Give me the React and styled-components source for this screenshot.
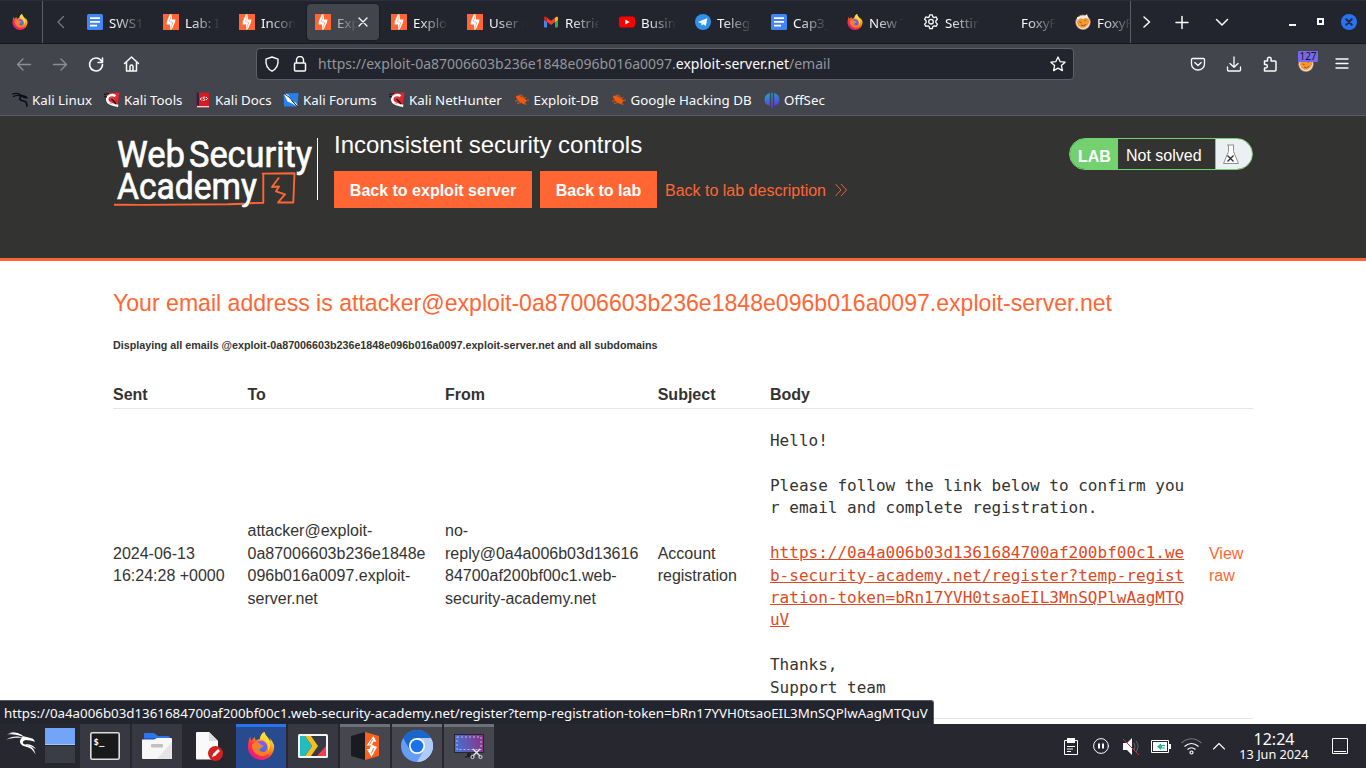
import React from "react";
import styled, { createGlobalStyle, css } from "styled-components";

const Global = createGlobalStyle`
  *, *::before, *::after { box-sizing: border-box; }
  html, body { margin: 0; padding: 0; height: 768px; overflow: hidden; background: #fff; }
  svg { display: block; flex: none; }
`;

const ui = `"Noto Sans", "Open Sans", sans-serif`;
const page = `"Liberation Sans", Arial, sans-serif`;

const Screen = styled.div`
  width: 1366px;
  height: 768px;
  display: flex;
  flex-direction: column;
  overflow: hidden;
  position: relative;
  background: #fff;
  font-family: ${ui};
`;

/* ---------- browser chrome ---------- */
const TabBar = styled.div`
  height: 44px;
  flex: none;
  display: flex;
  align-items: stretch;
  background: #23252e;
  border-top: 1px solid #2b2d41;
  border-bottom: 1px solid #16181f;
`;
const PinnedTab = styled.div`
  width: 43px;
  border-right: 1px solid #5b5c66;
  padding: 13px 0 0 12px;
`;
const ScrollLeft = styled.div`
  width: 34px;
  padding: 13px 0 0 10px;
`;
const TabStrip = styled.div`
  width: 1053px;
  display: flex;
  overflow: hidden;
`;
const Tab = styled.div`
  flex: none;
  width: 72px;
  height: 36px;
  margin: 3px 2px;
  padding-left: 8px;
  display: flex;
  align-items: center;
  border-radius: 4px;
  ${(p) => p.$active && css`
    background: #42454c;
    box-shadow: 0 0 2px rgba(0, 0, 0, 0.6);
  `}
`;
const TabIcon = styled.span`
  width: 16px;
  height: 16px;
  margin-right: 6px;
  flex: none;
`;
const TabLabel = styled.span`
  width: ${(p) => (p.$active ? 20 : 34)}px;
  overflow: hidden;
  white-space: nowrap;
  font-size: 13.33px;
  line-height: 20px;
  padding-top: 1px;
  color: #fbfbfe;
  mask-image: linear-gradient(to right, #000 ${(p) => (p.$active ? -40 : 15)}%, transparent 104%);
`;
const TabTools = styled.div`
  flex: 1;
  display: flex;
  align-items: center;
  border-left: 1px solid #5b5c66;
  padding: 0 8px 0 7px;
`;
const Gap = styled.span`
  flex: none;
  width: ${(p) => p.$w}px;
`;
const CloseWindow = styled.span`
  width: 16px;
  height: 16px;
  border-radius: 50%;
  background: #2673f5;
  display: grid;
  place-items: center;
`;

const NavBar = styled.div`
  height: 40px;
  flex: none;
  display: flex;
  align-items: center;
  padding-left: 14px;
  background: #42454c;
`;
const AddressBar = styled.div`
  width: 818px;
  height: 32px;
  display: flex;
  align-items: center;
  padding: 0 7px 0 7px;
  border: 1px solid #5d6067;
  border-radius: 4px;
  background: #23252e;
`;
const Url = styled.span`
  flex: 1;
  white-space: nowrap;
  font-size: 14px;
  line-height: 20px;
  color: #94959b;
  b { font-weight: 400; color: #fbfbfe; }
`;
const ExtensionIcon = styled.span`
  position: relative;
  width: 20px;
  height: 26px;
  padding: 5px 0 0 1px;
`;
const ExtensionCount = styled.span`
  position: absolute;
  left: 1px;
  top: 0;
  width: 20px;
  height: 11px;
  border-radius: 1px;
  background: #7767ec;
  color: #17171e;
  font-size: 10px;
  line-height: 11px;
  text-align: center;
`;

const Bookmarks = styled.div`
  height: 32px;
  flex: none;
  display: flex;
  align-items: center;
  padding: 0 0 0 12px;
  background: #42454c;
  border-bottom: 1px solid #5b5c62;
`;
const Bookmark = styled.div`
  width: ${(p) => p.$w}px;
  display: flex;
  align-items: center;
  gap: 4px;
  white-space: nowrap;
  color: #fbfbfe;
  font-size: 13.33px;
  line-height: 20px;
`;

/* ---------- lab page ---------- */
const Banner = styled.header`
  height: 145px;
  flex: none;
  display: flex;
  padding: 18px 113px 0;
  background: #333332;
  border-bottom: 3px solid #ff6633;
  color: #fff;
  font-family: ${page};
`;
const LogoBox = styled.div`
  width: 205px;
  height: 66px;
  position: relative;
`;
const BannerMain = styled.div`
  flex: 1;
  margin-left: 16px;
`;
const LabTitle = styled.h2`
  margin: 0;
  font-size: 24px;
  font-weight: 400;
  line-height: 22px;
  height: 37px;
  white-space: nowrap;
`;
const Actions = styled.div`
  display: flex;
  align-items: center;
  gap: 8px;
`;
const ActionButton = styled.a`
  width: ${(p) => p.$w}px;
  height: 37px;
  line-height: 40px;
  text-align: center;
  background: #ff6633;
  color: #fff;
  font-size: 16px;
  font-weight: 700;
  white-space: nowrap;
`;
const DescriptionLink = styled.a`
  display: flex;
  align-items: center;
  gap: 8px;
  padding-top: 2px;
  color: #ff6633;
  font-size: 16px;
  line-height: 23px;
  white-space: nowrap;
`;
const LabStatus = styled.div`
  width: 184px;
  height: 32px;
  margin-top: 4px;
  display: flex;
  overflow: hidden;
  border: 1px solid #73d26f;
  border-radius: 16px;
  font-size: 16px;
  line-height: 34px;
`;
const StatusTag = styled.span`
  width: 48px;
  padding-left: 8px;
  line-height: 36px;
  background: #73d26f;
  font-weight: 700;
`;
const StatusText = styled.span`
  flex: 1;
  padding-left: 8px;
`;
const StatusFlask = styled.span`
  width: 37px;
  padding: 5px 0 0 6px;
  background: #ecf0f2;
  border-left: 1px solid #73d26f;
`;

const Content = styled.main`
  flex: 1;
  min-height: 0;
  overflow: hidden;
  padding: 28px 113px 0;
  color: #333332;
  font-family: ${page};
`;
const Address = styled.h1`
  margin: 0;
  height: 45px;
  font-size: 23.09px;
  font-weight: 400;
  line-height: 28px;
  color: #ff6633;
  white-space: nowrap;
`;
const Notice = styled.h6`
  margin: 0;
  height: 46px;
  font-size: 10.74px;
  line-height: 22px;
  white-space: nowrap;
`;
const Row = styled.div`
  display: grid;
  grid-template-columns: 134.5px 197.5px 212.7px 112.3px 439px 44px;
  align-items: center;
  height: ${(p) => p.$h}px;
  padding-top: 2px;
  border-bottom: 1px solid #e5e5e5;
  font-size: 16px;
  font-weight: ${(p) => (p.$head ? 700 : 400)};
  line-height: 22.4px;
  white-space: pre;
`;
const Cell = styled.span`
  padding-top: 1.4px;
`;
const Mail = styled.pre`
  margin: 0;
  font-family: "DejaVu Sans Mono", monospace;
  font-size: 16px;
  line-height: 22.4px;
  a { color: #dc4a24; text-decoration: underline; }
`;
const RawLink = styled(Cell)`
  color: #ff6633;
`;

/* ---------- desktop ---------- */
const LinkPreview = styled.div`
  position: absolute;
  left: 0;
  bottom: 44px;
  width: 934px;
  height: 24px;
  padding-left: 4px;
  background: #23252e;
  border-top: 1px solid #5b5c62;
  border-right: 1px solid #5b5c62;
  border-top-right-radius: 3px;
  color: #fbfbfe;
  font-size: 13.32px;
  line-height: 25px;
  white-space: nowrap;
`;
const Taskbar = styled.footer`
  height: 44px;
  flex: none;
  display: flex;
  background: #26272f;
  color: #fcfcfc;
`;
const Launcher = styled.div`
  width: 45px;
  padding: 7px 0 0 6px;
`;
const Pager = styled.div`
  width: 30px;
  margin-right: 5px;
  padding-top: 4px;
  display: flex;
  flex-direction: column;
  gap: 1px;
`;
const Desk = styled.span`
  height: 17px;
  background: ${(p) => (p.$on ? "#72a4f8" : "#3b3d46")};
  border-bottom: ${(p) => (p.$on ? "1px solid #a5c6fd" : "0")};
`;
const taskKinds = {
  plain: css`background: #26272f; border-color: #26272f;`,
  pinned: css`background: #373841; border-color: #373841;`,
  open: css`background: #45464e; border-color: #6f7078;`,
  active: css`background: #284b8f; border-color: #2b74ef;`,
};
const Task = styled.div`
  width: 50px;
  margin-right: 2px;
  border-top: 3px solid;
  padding-bottom: 3px;
  display: grid;
  place-items: center;
  ${(p) => taskKinds[p.$kind]}
`;
const Tray = styled.div`
  margin-left: auto;
  width: 302px;
  display: flex;
  align-items: center;
`;
const Clock = styled.div`
  width: 80px;
  text-align: center;
  white-space: nowrap;
`;
const Time = styled.div`
  font-size: 16px;
  line-height: 16px;
`;
const DateText = styled.div`
  font-size: 12.7px;
  line-height: 14px;
`;

/* ---------- drawings ---------- */
const Line = ({ w = 16, h = w, box = `0 0 ${w} ${h}`, color = "#fbfbfe", sw = 1.3, children }) => (
  <svg width={w} height={h} viewBox={box} fill="none" stroke={color} strokeWidth={sw} strokeLinecap="round" strokeLinejoin="round">
    {children}
  </svg>
);
const FirefoxIcon = ({ size = 16 }) => (
  <svg width={size} height={size} viewBox="0 0 32 32">
    <defs>
      <linearGradient id="fxa" x1="0.85" y1="0.1" x2="0.2" y2="0.95">
        <stop offset="0" stopColor="#fff44f" />
        <stop offset="0.35" stopColor="#ff980e" />
        <stop offset="0.65" stopColor="#ff3647" />
        <stop offset="1" stopColor="#e31587" />
      </linearGradient>
      <linearGradient id="fxb" x1="0.5" y1="0" x2="0.5" y2="1">
        <stop offset="0" stopColor="#9059ff" />
        <stop offset="1" stopColor="#3b6ce8" />
      </linearGradient>
    </defs>
    <path d="M30 13c-1-3-3-5-4-6 1 2 1 3 1 4-2-5-6-6-7-11-4 2-5 6-5 8-2 0-4 1-5 2 0-1-1-2-1-4-2 1-3 3-4 4-1-1-1-3-1-5C2 8 1 13 1 17c0 8 7 15 15 15s15-7 15-15c0-1 0-3-1-4z" fill="url(#fxa)" />
    <circle cx="16" cy="17" r="7" fill="url(#fxb)" />
    <path d="M6 14c3-3 7-3 9 0 2 1 4 1 4 2s-3 2-4 3-1 2 1 3c3 2 7 0 8-3 1-4-1-7-4-9 7 1 9 8 6 13-3 4-9 6-14 3S5 18 6 14z" fill="#ff8a16" opacity="0.85" />
    <path d="M20 0c1 5 5 7 6 12 1 4 0 8-2 10 1-5 0-9-4-12-3-2-5-1-5-2 0-3 2-7 5-8z" fill="#ffda36" />
  </svg>
);
const BurpIcon = () => (
  <svg width="16" height="16" viewBox="0 0 16 16">
    <rect width="16" height="16" fill="#ff6633" />
    <path d="M6.800 0.500H9V5.500H12.500L12 8.500 8.600 15.500H7V10.500H3.600L3.800 7.300z" fill="#fff" />
    <path d="M8.600 1L6.300 7.300 9.800 8.700 7.600 14.500" fill="none" stroke="#ff6633" strokeWidth="0.900" opacity="0.550" />
  </svg>
);
const DocsIcon = () => (
  <svg width="16" height="16" viewBox="0 0 16 16">
    <rect width="16" height="16" rx="1.6" fill="#4285f4" />
    <path d="M3 4.1h10M3 7.9h10M3 11.7h7" stroke="#fff" strokeWidth="1.7" />
  </svg>
);
const GmailIcon = () => (
  <svg width="16" height="16" viewBox="0 0 16 16">
    <path d="M1 3.5h3v10H2a1 1 0 0 1-1-1z" fill="#4285f4" />
    <path d="M12 3.5h3v9a1 1 0 0 1-1 1h-2z" fill="#34a853" />
    <path d="M12 4l1-1c1-.7 2 0 2 1v2l-3 2.3z" fill="#fbbc04" />
    <path d="M1 4c0-1.200 1.200-1.700 2-1l5 3.800 4-3v4.300l-4 3-4-3L1 6z" fill="#ea4335" />
    <path d="M1 4v2l3 2.200V4L3 3C2 2.400 1 3 1 4z" fill="#c5221f" />
  </svg>
);
const YoutubeIcon = () => (
  <svg width="16" height="16" viewBox="0 0 16 16">
    <rect y="2.500" width="16" height="11" rx="2.800" fill="#f00" />
    <path d="M6.300 5.500v5L10.600 8z" fill="#fff" />
  </svg>
);
const TelegramIcon = () => (
  <svg width="16" height="16" viewBox="0 0 16 16">
    <circle cx="8" cy="8" r="8" fill="#2f92ea" />
    <path d="M2.800 8L12.300 4.200 10.900 12 8.200 10.200 6.800 11.600 6.400 9.200z" fill="#fff" />
    <path d="M6.400 9.200L10.500 5.900 7.300 9.700 6.800 11.600z" fill="#bcdcf8" />
  </svg>
);
const GearIcon = () => (
  <Line sw={1.3}>
    <path d="M6.700 0.800h2.600l.5 2.100 1.200.7 2.100-.7 1.300 2.300-1.500 1.500v1.900l1.500 1.500-1.300 2.300-2.100-.6-1.200.7-.5 2.200H6.700l-.5-2.200-1.200-.7-2.100.6-1.300-2.300 1.500-1.500V6.700L1.600 5.200l1.300-2.300 2.100.7 1.200-.7z" />
    <circle cx="8" cy="7.700" r="2.300" />
  </Line>
);
const FoxyIcon = () => (
  <svg width="16" height="16" viewBox="0 0 16 16">
    <circle cx="8" cy="8.300" r="7.300" fill="#eee5db" stroke="#b98b64" strokeWidth="0.700" />
    <path d="M1.800 8L3 5l2-1 3 1 3-1 2.500 1 .8 3-1.300 3-3 2.500-3.500.5-3.200-2z" fill="#f39833" />
    <path d="M2 3l4 0-3 3zM10 2l2-2 1 4z" fill="#fff" />
    <path d="M4.500 8l2 .6M9.500 6.500l1.500-.7M6 11l2.600.8 2.500-1.600" stroke="#8a4515" strokeWidth="0.800" fill="none" />
  </svg>
);
const KaliLinuxIcon = () => (
  <svg width="16" height="16" viewBox="0 0 16 16" fill="none" stroke="#0c0c0f" strokeLinecap="round" strokeLinejoin="round">
    <path d="M.5 2C4 .8 7.500 1.200 9.800 4.200M1.500 4.500C4 3 7 3.300 9.500 4.500" strokeWidth="1.100" />
    <path d="M9.800 4.200C7 5.500 6.800 8.300 10.500 8.800S14.500 10.500 15 14M9.500 3.500l3.300.7 2 1.500-3.300-.5" strokeWidth="1.600" />
  </svg>
);
const KaliDragon = () => (
  <svg width="31" height="26" viewBox="0 0 31 26" fill="#fff">
    <path d="M1 3.200C7 1.200 14 1.500 18.200 6.200C13 3.700 7 3.200 1 3.200z" />
    <path d="M.3 8.800C6 4.800 12 4.600 18 7.200C12 6.500 6 6.500 .3 8.800z" />
    <path d="M3.500 1.200C9 .8 14 2 18 5.500C13 3.300 8 2.200 3.500 1.200z" />
    <path d="M17.500 5.200L22.500 6.500 27 7.800 29.300 10.800 24.200 9.600 19.500 9C16.500 10 15.700 12.500 19 13.400C24 14.300 28.500 16.500 29.500 23.500C26.500 17.500 23 16.300 18.500 15.200C12.300 13.300 13 8.300 17.500 5.200z" />
    <path d="M19 13.500C23.500 12.700 27.500 14.500 30 18C27 16 23.500 15 19 13.500z" />
  </svg>
);
const ToolsIcon = () => (
  <svg width="16" height="16" viewBox="0 0 16 16">
    <path d="M2.500 1L15.500 0.500 13.500 14.500 4 12z" fill="#e5252b" />
    <path d="M11.500 4.200C8 1.500 2.800 3.800 3.200 8c.6 4 5.500 4.500 11 6" fill="none" stroke="#fff" strokeWidth="2.400" />
    <path d="M0 2.500L5 1.500M0 4.500L3 5M7.500 6.500L12 12" stroke="#111" strokeWidth="1.200" />
    <path d="M6 6.200c1-.8 3-.5 4 1M5.500 11l3 1" stroke="#8e989e" strokeWidth="0.700" fill="none" />
  </svg>
);
const BookIcon = () => (
  <svg width="16" height="16" viewBox="0 0 16 16">
    <path d="M1.500 0.500H14V15.500H1.500z" fill="#d51b20" />
    <path d="M1.500 0.500H4v13.200H1.500z" fill="#242747" />
    <path d="M2 14h12v1.300H2z" fill="#f1d6d7" />
    <path d="M6.800 5.500L5.300 7l1.500 1.500M11 5l1.500 1.500L11 8M10.200 5.300c-2.500-.8-2.700 1.100-1.200 1.500s1 2.300-1.200 1.400" fill="none" stroke="#fff" strokeWidth="1" />
  </svg>
);
const ForumsIcon = () => (
  <svg width="16" height="16" viewBox="0 0 16 16">
    <path d="M0.500 1.500L15.500 1 14.500 14.500H1z" fill="#2581ee" />
    <path d="M0.800 2L5 2.500l3 4.500 5.500 4.500 1.500 4-5-3.500L4.500 9.500z" fill="#fff" />
    <path d="M0 1l6 4 9 10.500L8.500 8" fill="none" stroke="#15243b" strokeWidth="0.900" />
  </svg>
);
const BugIcon = () => (
  <svg width="16" height="16" viewBox="0 0 16 16">
    <path d="M1.800 4.200C4.500 3 9.500 5 12.500 8.700L11 11.300C6.500 11.800 3 8.500 1.800 4.200z" fill="#f05a0c" />
    <path d="M4.500 3.500L7.500 3l2 2.500M10 6.500l2.500-1.200M12 8.500l3-.5M1 9.200l3.500-.4M3 11.500l4-1 5.500 1.800M9 11l1.500 1.500" fill="none" stroke="#f05a0c" strokeWidth="0.900" />
  </svg>
);
const OffsecIcon = () => (
  <svg width="16" height="16" viewBox="0 0 16 16">
    <defs>
      <linearGradient id="os" x1="0" y1="0" x2="0.300" y2="1"><stop offset="0" stopColor="#10b5c5" /><stop offset="1" stopColor="#6635e5" /></linearGradient>
    </defs>
    <path d="M5.800 1v12.500C2.500 13.500.6 11 .6 7.500S2.500 2.200 5.800 1zM10.200 1c3.300 1.200 5.200 3 5.200 6.500s-1.900 6-5.200 6zM7.300 0.800h1.400v14.900H7.300z" fill="url(#os)" />
  </svg>
);

const AcademyLogo = () => (
  <svg width="205" height="74" viewBox="0 0 205 74">
    <g fill="#fff" stroke="#fff" strokeWidth="0.700" fontFamily="Roboto, sans-serif" fontSize="37">
      <text x="4" y="32.500" textLength="68" lengthAdjust="spacingAndGlyphs">Web</text>
      <text x="76" y="32.500" textLength="123" lengthAdjust="spacingAndGlyphs">Security</text>
      <text x="4" y="65" textLength="140" lengthAdjust="spacingAndGlyphs">Academy</text>
    </g>
    <path d="M1 70.800L30 70.900 115 70.300 131 69.800M137 69.200L150.300 68.800V40.200L149.600 39.600 181.500 39.300 180.300 68.500H165L172 60.300 163 57.300 166 52.500 159 53 166 43.500" fill="none" stroke="#ff6633" strokeWidth="1.900" strokeLinejoin="round" />
    <path d="M204.500 4v62" stroke="#fff" />
  </svg>
);

const FlaskIcon = () => (
  <svg width="18" height="21" viewBox="0 0 18 21" fill="none" stroke="#8e9192">
    <path d="M5 1h7M6.500 1v6.500L1.500 19.500h15L11.500 7.500V1" fill="#fff" />
    <path d="M5.500 11.500l6 6M11.500 11.500l-6 6" stroke="#333" strokeWidth="1.400" />
  </svg>
);
const TerminalIcon = () => (
  <svg width="30" height="28" viewBox="0 0 30 28">
    <rect x="0.800" y="0.800" width="28.400" height="26.400" rx="1.500" fill="#181a1b" stroke="#ddd" strokeWidth="1.600" />
    <text x="3.500" y="12.500" fill="#fff" fontFamily="DejaVu Sans Mono, monospace" fontWeight="700" fontSize="9">$_</text>
  </svg>
);
const FilesIcon = () => (
  <svg width="30" height="28" viewBox="0 0 30 28">
    <path d="M2 2q0-1 1-1h9l4 3h10q2 0 2 2v4H2z" fill="#2d75ef" />
    <path d="M2 6h26v4H2z" fill="#2058bd" />
    <path d="M0 7.500h12l3-1.500h14q1 0 1 1v19q0 1-1 1H1q-1 0-1-1z" fill="#f7f7f7" />
    <path d="M30 10v17H15z" fill="#e5e5e5" />
    <rect x="9" y="12" width="12" height="3.500" rx="1" fill="#c1c1c1" />
  </svg>
);
const DocumentIcon = () => (
  <svg width="28" height="30" viewBox="0 0 28 30">
    <path d="M1 2q0-1 1-1h12l9 9v17.500q0 1-1 1H2q-1 0-1-1z" fill="#fafafa" />
    <path d="M14 1l9 9h-9z" fill="#ddd" />
    <circle cx="20.500" cy="22.500" r="7.500" fill="#d52020" />
    <path d="M17 26l1-3 5-5 2 2-5 5z" fill="#fff" />
  </svg>
);
const ArrowPanelIcon = () => (
  <svg width="30" height="24" viewBox="0 0 30 24">
    <rect width="30" height="24" rx="1.500" fill="#f5f5f5" />
    <path d="M2 2h26v20H2z" fill="#353a46" />
    <path d="M7 2h6l7 10-7 10H7l7-10z" fill="#f8bd20" />
    <path d="M2 2h5l7 10-7 10H2z" fill="#24bcbf" />
    <path d="M28 12v10h-9z" fill="#f33e4c" />
  </svg>
);
const BurpSuiteIcon = () => (
  <svg width="28" height="28" viewBox="0 0 28 28">
    <path d="M0 4L14 0v28L0 24z" fill="#191b20" />
    <path d="M14 0l14 4v20l-14 4z" fill="#ff6020" />
    <path d="M22.500 4L15.500 13.500H20L18.500 17H15.800L20.500 25 26 15 21 12.800 22.500 9.500 25.500 10z" fill="#fff" />
    <path d="M21.500 7L18.500 12.500M22.500 16L20.500 21.500" stroke="#ff6020" strokeWidth="0.900" />
  </svg>
);
const ChromiumIcon = () => (
  <svg width="32" height="32" viewBox="0 0 32 32">
    <circle cx="16" cy="16" r="16" fill="#669df6" />
    <path d="M2.100 8A16 16 0 0 1 29.900 8H16L9.100 20z" fill="#1b66c9" />
    <path d="M29.900 8A16 16 0 0 1 16 32L22.900 20 22.900 12 16 8z" fill="#aecbfa" />
    <circle cx="16" cy="16" r="8" fill="#fff" />
    <circle cx="16" cy="16" r="6.300" fill="#1a73e8" />
  </svg>
);
const ScreenshotIcon = () => (
  <svg width="30" height="28" viewBox="0 0 30 28">
    <defs><linearGradient id="ss" x1="0" y1="0.200" x2="1" y2="0"><stop offset="0" stopColor="#466fd0" /><stop offset="1" stopColor="#91307d" /></linearGradient></defs>
    <rect x="0.500" y="2.500" width="29" height="18" fill="url(#ss)" stroke="#252831" />
    <rect x="3" y="5" width="24" height="12.500" fill="none" stroke="#b8b9ed" strokeDasharray="2 2" />
    <path d="M11 24h9v1.500h-9zM13 21h4v3h-4z" fill="#202228" />
    <path d="M19 17l7 7M26 17l-7 7" stroke="#eee" strokeWidth="1.300" />
    <circle cx="18.500" cy="25" r="1.600" fill="none" stroke="#ddd" /><circle cx="26.500" cy="25" r="1.600" fill="none" stroke="#ddd" />
  </svg>
);

const tabs = [
  [DocsIcon, "SWS101"],
  [BurpIcon, "Lab: In"],
  [BurpIcon, "Incons"],
  [BurpIcon, "Expl", true],
  [BurpIcon, "Exploi"],
  [BurpIcon, "User r"],
  [GmailIcon, "Retriev"],
  [YoutubeIcon, "Busine"],
  [TelegramIcon, "Telegr"],
  [DocsIcon, "Cap3_"],
  [FirefoxIcon, "New T"],
  [GearIcon, "Setting"],
  [null, "FoxyPr"],
  [FoxyIcon, "FoxyPr"],
];

const bookmarks = [
  [KaliLinuxIcon, "Kali Linux", 92],
  [ToolsIcon, "Kali Tools", 91],
  [BookIcon, "Kali Docs", 88],
  [ForumsIcon, "Kali Forums", 106],
  [ToolsIcon, "Kali NetHunter", 124.500],
  [BugIcon, "Exploit-DB", 97],
  [BugIcon, "Google Hacking DB", 153.500],
  [OffsecIcon, "OffSec", 80],
];

const tasks = [
  ["pinned", <TerminalIcon />],
  ["pinned", <FilesIcon />],
  ["plain", <DocumentIcon />],
  ["active", <FirefoxIcon size={28} />],
  ["pinned", <ArrowPanelIcon />],
  ["open", <BurpSuiteIcon />],
  ["open", <ChromiumIcon />],
  ["open", <ScreenshotIcon />],
];

export default function App() {
  return (
    <Screen>
      <Global />
      <TabBar>
        <PinnedTab><FirefoxIcon /></PinnedTab>
        <ScrollLeft><Line color="#777981"><path d="M10.500 2.500L5 8l5.500 5.500" /></Line></ScrollLeft>
        <TabStrip>
          {tabs.map(([Icon, label, active], i) => (
            <Tab key={i} $active={active}>
              <TabIcon>{Icon && <Icon />}</TabIcon>
              <TabLabel $active={active}>{label}</TabLabel>
              {active && <Line w={12}><path d="M2 2l8 8M10 2l-8 8" /></Line>}
            </Tab>
          ))}
        </TabStrip>
        <TabTools>
          <Line sw={1.500}><path d="M6 3l5.500 5L6 13" /></Line>
          <Gap $w={20} />
          <Line sw={1.500}><path d="M2 8.500h12M8 2.500v12" /></Line>
          <Gap $w={24} />
          <Line sw={1.500}><path d="M2.500 5.500L8 11l5.500-5.500" /></Line>
          <Gap $w={58} />
          <Line w={10} sw={2}><path d="M2 8h5" strokeLinecap="square" /></Line>
          <Gap $w={18} />
          <Line w={10} sw={2}><path d="M2 2h5v5H2z" strokeLinejoin="miter" /></Line>
          <Gap $w={15} />
          <CloseWindow><Line w={8} color="#222a3e" sw={2}><path d="M1.300 1.300l5.400 5.400M6.700 1.300L1.300 6.700" /></Line></CloseWindow>
        </TabTools>
      </TabBar>
      <NavBar>
        <Line w={20} color="#8d8f95"><path d="M16.500 10.500h-13M9 5l-5.500 5.500L9 16" /></Line>
        <Gap $w={16} />
        <Line w={20} color="#8d8f95"><path d="M3.500 10.500h13M11 5l5.500 5.500L11 16" /></Line>
        <Gap $w={16} />
        <Line w={20} sw={1.600}><path d="M15.500 7A6.500 6.500 0 1 0 16.500 10.500M16.500 4v4.500H12" /></Line>
        <Gap $w={16} />
        <Line w={20} sw={1.500}><path d="M2.500 9.500L9.500 3l7 6.500M4.500 8v9h10V8M8 17v-4.500a1.500 1.500 0 0 1 3 0V17" /></Line>
        <Gap $w={114} />
        <AddressBar>
          <Line w={16} sw={1.400}><path d="M8 1l6 2.200c.6 5.500-2 10-6 12C4 13.200 1.400 8.700 2 3.200z" /></Line>
          <Gap $w={12} />
          <Line w={16} sw={1.500}><path d="M3.500 7h9q1 0 1 1v6q0 1-1 1h-9q-1 0-1-1V8q0-1 1-1zM4.500 7V4a3.500 3.500 0 0 1 7 0v3" /></Line>
          <Gap $w={10} />
          <Url>https://exploit-0a87006603b236e1848e096b016a0097.<b>exploit-server.net</b>/email</Url>
          <Line w={16}><path d="M8 1l2.100 4.600 5 .6-3.700 3.400 1 5L8 12.100l-4.400 2.500 1-5L.9 6.200l5-.6z" /></Line>
        </AddressBar>
        <Gap $w={116} />
        <Line w={16}><path d="M2.500 2.500h11q1 0 1 1V8A6.500 6 0 0 1 1.500 8V3.500q0-1 1-1zM4.800 6.500L8 9.500l3.200-3" /></Line>
        <Gap $w={20} />
        <Line w={16}><path d="M8 1v10M4 7.500L8 11.300l4-3.800M1.500 11v3q0 1 1 1h11q1 0 1-1v-3" /></Line>
        <Gap $w={20} />
        <Line w={16} sw={1.500}><path d="M2.500 5h3V3a1.800 1.800 0 0 1 3.600 0v2H13q1 0 1 1v8q0 1-1 1H2.500v-3H4a1.800 1.800 0 0 0 0-3.500H2.500z" /></Line>
        <Gap $w={19} />
        <ExtensionIcon><FoxyIcon /><ExtensionCount>127</ExtensionCount></ExtensionIcon>
        <Gap $w={18} />
        <Line w={14} h={14} sw={1.300}><path d="M1 2h12M1 6.500h12M1 11h12" /></Line>
      </NavBar>
      <Bookmarks>
        {bookmarks.map(([Icon, label, w]) => (
          <Bookmark key={label} $w={w}><Icon />{label}</Bookmark>
        ))}
      </Bookmarks>

      <Banner>
        <LogoBox><AcademyLogo /></LogoBox>
        <BannerMain>
          <LabTitle>Inconsistent security controls</LabTitle>
          <Actions>
            <ActionButton $w={198}>Back to exploit server</ActionButton>
            <ActionButton $w={117}>Back to lab</ActionButton>
            <DescriptionLink>
              Back to lab description
              <svg width="14" height="16" viewBox="0 0 14 16" fill="none" stroke="#ff6633" strokeWidth="0.900"><path d="M1.500 1L7 7l-5.500 6M7 1l5.500 6L7 13" /></svg>
            </DescriptionLink>
          </Actions>
        </BannerMain>
        <LabStatus>
          <StatusTag>LAB</StatusTag>
          <StatusText>Not solved</StatusText>
          <StatusFlask><FlaskIcon /></StatusFlask>
        </LabStatus>
      </Banner>

      <Content>
        <Address>Your email address is attacker@exploit-0a87006603b236e1848e096b016a0097.exploit-server.net</Address>
        <Notice>Displaying all emails @exploit-0a87006603b236e1848e096b016a0097.exploit-server.net and all subdomains</Notice>
        <Row $head $h={29}>
          <span>Sent</span><span>To</span><span>From</span><span>Subject</span><span>Body</span><span />
        </Row>
        <Row $h={310}>
          <Cell>{"2024-06-13\n16:24:28 +0000"}</Cell>
          <Cell>{"attacker@exploit-\n0a87006603b236e1848e\n096b016a0097.exploit-\nserver.net"}</Cell>
          <Cell>{"no-\nreply@0a4a006b03d13616\n84700af200bf00c1.web-\nsecurity-academy.net"}</Cell>
          <Cell>{"Account\nregistration"}</Cell>
          <Mail>
            {"Hello!\n\nPlease follow the link below to confirm you\nr email and complete registration.\n\n"}
            <a>{"https://0a4a006b03d1361684700af200bf00c1.we\nb-security-academy.net/register?temp-regist\nration-token=bRn17YVH0tsaoEIL3MnSQPlwAagMTQ\nuV"}</a>
            {"\n\nThanks,\nSupport team"}
          </Mail>
          <RawLink>{"View\nraw"}</RawLink>
        </Row>
      </Content>

      <Taskbar>
        <Launcher><KaliDragon /></Launcher>
        <Pager><Desk $on /><Desk /></Pager>
        {tasks.map(([kind, icon], i) => (
          <Task key={i} $kind={kind}>{icon}</Task>
        ))}
        <Tray>
          <svg width="14" height="17" viewBox="0 0 14 17" fill="none" stroke="#fcfcfc"><path d="M.5 2.500h13v14H.5zM3 8.500h8M3 11h6M3 13.500h4" /><path d="M3 0h8v5H3z" fill="#fcfcfc" stroke="none" /></svg>
          <Gap $w={15} />
          <Line w={16} sw={1}><circle cx="8" cy="8" r="7.400" /><path d="M6 5.500v5M10 5.500v5" strokeWidth="2" strokeLinecap="butt" /></Line>
          <Gap $w={14} />
          <svg width="16" height="17" viewBox="0 0 16 17"><path d="M0 5h4l5-5v17l-5-5H0z" fill="#fff" /><path d="M11 5q2 3 0 7M13 3q4 5 0 11" fill="none" stroke="#686970" /><path d="M0 1l16 16" stroke="#d22b35" /></svg>
          <Gap $w={12} />
          <svg width="20" height="13" viewBox="0 0 20 13"><path d="M.5.500h17v12H.5z" fill="none" stroke="#fff" /><path d="M18 4h2v5h-2zM2 2h14v9H2z" fill="#fff" /><path d="M6 6.500l4-3V5h4v1h-3v1.500h3v1h-4V10z" fill="#1bbc9b" /></svg>
          <Gap $w={10} />
          <svg width="21" height="17" viewBox="0 0 21 17" fill="none" stroke="#fcfcfc" strokeWidth="1.200"><path d="M.5 5q10-8.500 20 0" stroke="#73747a" /><path d="M3.500 8.500q7-6 14 0M6.500 11.500q4-3.500 8 0" /><circle cx="10.500" cy="14.500" r="1.500" /></svg>
          <Gap $w={11} />
          <Line w={12} h={8} sw={1.100}><path d="M.5 7L6 1.500 11.500 7" /></Line>
          <Gap $w={9} />
          <Clock>
            <Time>12:24</Time>
            <DateText>13 Jun 2024</DateText>
          </Clock>
          <Gap $w={18} />
          <svg width="16" height="16" viewBox="0 0 16 16" fill="none" stroke="#fcfcfc"><path d="M.5.500h15v15H.5zM2 13.500h12" /></svg>
        </Tray>
      </Taskbar>
      <LinkPreview>https://0a4a006b03d1361684700af200bf00c1.web-security-academy.net/register?temp-registration-token=bRn17YVH0tsaoEIL3MnSQPlwAagMTQuV</LinkPreview>
    </Screen>
  );
}
